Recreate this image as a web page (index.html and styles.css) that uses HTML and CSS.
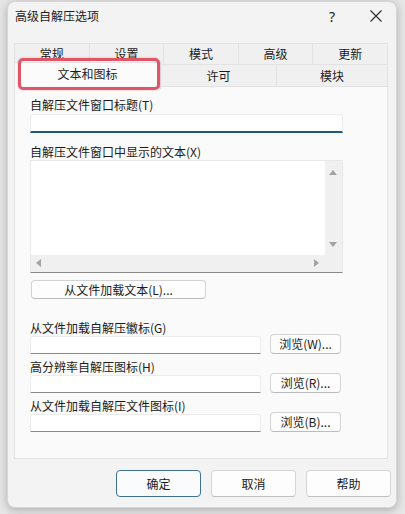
FILE: index.html
```html
<!DOCTYPE html>
<html lang="zh-CN">
<head>
<meta charset="utf-8">
<link rel="stylesheet" href="styles.css">
</head>
<body>
<div class="dialog">
  <div class="titlebar">
    <span class="title">高级自解压选项</span>
    <span class="help">?</span>
    <span class="close"><svg width="12" height="12" viewBox="0 0 12 12"><path d="M0.5 0.5 L11.5 11.5 M11.5 0.5 L0.5 11.5" stroke="#2b2b2b" stroke-width="1.1" fill="none"/></svg></span>
  </div>
  <div class="tabs">
    <div class="tabrow row1">
      <div class="tab">常规</div>
      <div class="tab">设置</div>
      <div class="tab">模式</div>
      <div class="tab">高级</div>
      <div class="tab">更新</div>
    </div>
    <div class="tabrow row2">
      <div class="tab sel">文本和图标</div>
      <div class="tab">许可</div>
      <div class="tab">模块</div>
    </div>
  </div>
  <div class="panel">
    <div class="label">自解压文件窗口标题(T)</div>
    <div class="input wide focus"></div>
    <div class="label gap">自解压文件窗口中显示的文本(X)</div>
    <div class="textarea">
      <div class="ta-main">
        <div class="ta-body"></div>
        <div class="vscroll">
          <span class="arr up"></span>
          <span class="arr down"></span>
        </div>
      </div>
      <div class="hscroll">
        <div class="hs-track">
          <span class="arr left"></span>
          <span class="arr right"></span>
        </div>
        <div class="corner"></div>
      </div>
    </div>
    <div class="btn loadtext">从文件加载文本(L)...</div>
    <div class="label big-gap">从文件加载自解压徽标(G)</div>
    <div class="row">
      <div class="input short"></div>
      <div class="btn browse">浏览(W)...</div>
    </div>
    <div class="label small-gap">高分辨率自解压图标(H)</div>
    <div class="row">
      <div class="input short"></div>
      <div class="btn browse">浏览(R)...</div>
    </div>
    <div class="label small-gap">从文件加载自解压文件图标(I)</div>
    <div class="row">
      <div class="input short"></div>
      <div class="btn browse">浏览(B)...</div>
    </div>
  </div>
  <div class="footer">
    <div class="fbtn default">确定</div>
    <div class="fbtn">取消</div>
    <div class="fbtn">帮助</div>
  </div>
  <div class="annot"></div>
</div>
</body>
</html>
```
FILE: styles.css
```css
html, body {
  margin: 0;
  padding: 0;
}
body {
  width: 405px;
  height: 514px;
  overflow: hidden;
  background: #e6e6e6;
  font-family: "Noto Sans CJK SC", "Noto Sans", sans-serif;
  font-size: 12px;
  color: #1b1b1b;
}
.dialog {
  position: relative;
  margin: 1px 0 0 7px;
  width: 390px;
  height: 507px;
  box-sizing: border-box;
  background: #f3f3f3;
  border: 1px solid #d6d6d6;
  border-radius: 8px;
  box-shadow: 0 2px 8px rgba(0,0,0,0.25);
  display: flex;
  flex-direction: column;
}
.titlebar {
  height: 41px;
  display: flex;
  align-items: flex-start;
  padding-top: 6px;
  box-sizing: border-box;
}
.title {
  margin-left: 7px;
  line-height: 16px;
  font-size: 12px;
}
.help {
  margin-left: auto;
  margin-right: 35px;
  font-size: 14px;
  line-height: 16px;
  font-family: "Noto Sans", sans-serif;
  margin-top: 1px;
}
.close {
  margin-right: 14px;
  margin-top: 2px;
  display: flex;
}
.tabs {
  margin-left: 6px;
  width: 374px;
  display: flex;
  flex-direction: column;
}
.tabrow {
  display: flex;
}
.row1 {
  height: 21px;
}
.row1 .tab {
  flex: 1;
  border: 1px solid #e2e2e2;
  border-bottom: none;
  margin-left: -1px;
  background: #f0f0f0;
  text-align: center;
  line-height: 20px;
}
.row1 .tab:first-child { margin-left: 0; }
.row2 {
  height: 22px;
}
.row2 .tab {
  border: 1px solid #e2e2e2;
  border-bottom: none;
  margin-left: -1px;
  background: #f0f0f0;
  text-align: center;
  line-height: 22px;
  width: 115px;
}
.row2 .tab.sel {
  width: 145px;
  margin-left: 0;
  background: #fbfbfb;
  position: relative;
  z-index: 1;
  margin-top: -2px;
  height: 26px;
  line-height: 22px;
  padding-top: 0;
}
.row2 .tab:last-child {
  flex: 1;
}
.panel {
  margin-left: 6px;
  width: 374px;
  height: 373px;
  box-sizing: border-box;
  background: #fafafa;
  border: 1px solid #e2e2e2;
  padding: 10px 0 0 15px;
  display: flex;
  flex-direction: column;
  align-items: flex-start;
}
.label {
  line-height: 16px;
  height: 16px;
  white-space: nowrap;
}
.label.gap { margin-top: 11px; }
.label.big-gap { margin-top: 21px; }
.label.small-gap { margin-top: 5px; }
.input {
  box-sizing: border-box;
  background: #ffffff;
  border: 1px solid #ececec;
  border-bottom: 1px solid #8a8a8a;
  border-radius: 3px 3px 0 0;
}
.input.wide {
  width: 313px;
  height: 19px;
  margin-top: 1px;
}
.input.focus {
  border-bottom: 2px solid #1d5a85;
}
.input.short {
  width: 231px;
  height: 18px;
}
.textarea {
  width: 313px;
  height: 113px;
  box-sizing: border-box;
  border: 1px solid #e8e8e8;
  border-bottom: 1px solid #8a8a8a;
  background: #ffffff;
  display: flex;
  flex-direction: column;
}
.ta-main {
  flex: 1;
  display: flex;
}
.ta-body {
  flex: 1;
  background: #ffffff;
}
.vscroll {
  width: 17px;
  background: #f0f0f0;
  position: relative;
}
.hscroll {
  height: 17px;
  display: flex;
}
.hs-track {
  flex: 1;
  background: #f0f0f0;
  position: relative;
}
.corner {
  width: 17px;
  background: #f0f0f0;
}
.arr {
  position: absolute;
  width: 0;
  height: 0;
  border-style: solid;
  border-color: transparent;
}
.arr.up {
  top: 9px;
  left: 4px;
  border-width: 0 4px 5px 4px;
  border-bottom-color: #a3a3a3;
}
.arr.down {
  bottom: 8px;
  left: 4px;
  border-width: 5px 4px 0 4px;
  border-top-color: #a3a3a3;
}
.arr.left {
  left: 5px;
  top: 4px;
  border-width: 4px 5px 4px 0;
  border-right-color: #a3a3a3;
}
.arr.right {
  right: 6px;
  top: 4px;
  border-width: 4px 0 4px 5px;
  border-left-color: #a3a3a3;
}
.btn {
  box-sizing: border-box;
  background: #fdfdfd;
  border: 1px solid #d3d3d3;
  border-bottom-color: #bcbcbc;
  border-radius: 4px;
  text-align: center;
  white-space: nowrap;
}
.loadtext {
  margin-top: 7px;
  margin-left: 1px;
  width: 175px;
  height: 19px;
  line-height: 17px;
}
.row {
  display: flex;
  align-items: flex-end;
  height: 18px;
}
.browse {
  width: 71px;
  height: 20px;
  line-height: 18px;
  margin-left: 9px;
  margin-top: -2px;
}
.footer {
  display: flex;
  justify-content: flex-end;
  gap: 10px;
  padding: 11px 5px 0 0;
}
.fbtn {
  width: 85px;
  height: 27px;
  box-sizing: border-box;
  background: #fdfdfd;
  border: 1px solid #d5d5d5;
  border-bottom-color: #c0c0c0;
  border-radius: 4px;
  text-align: center;
  line-height: 25px;
  font-size: 12px;
}
.fbtn.default {
  border: 1px solid #3f6f92;
  background: #f9fbfd;
}
.annot {
  position: absolute;
  left: 10px;
  top: 56px;
  width: 142px;
  height: 32px;
  box-sizing: border-box;
  border: 3px solid #df5669;
  border-radius: 5px;
  z-index: 5;
  box-shadow: 0 0 2px rgba(223,86,105,0.5);
}
```
